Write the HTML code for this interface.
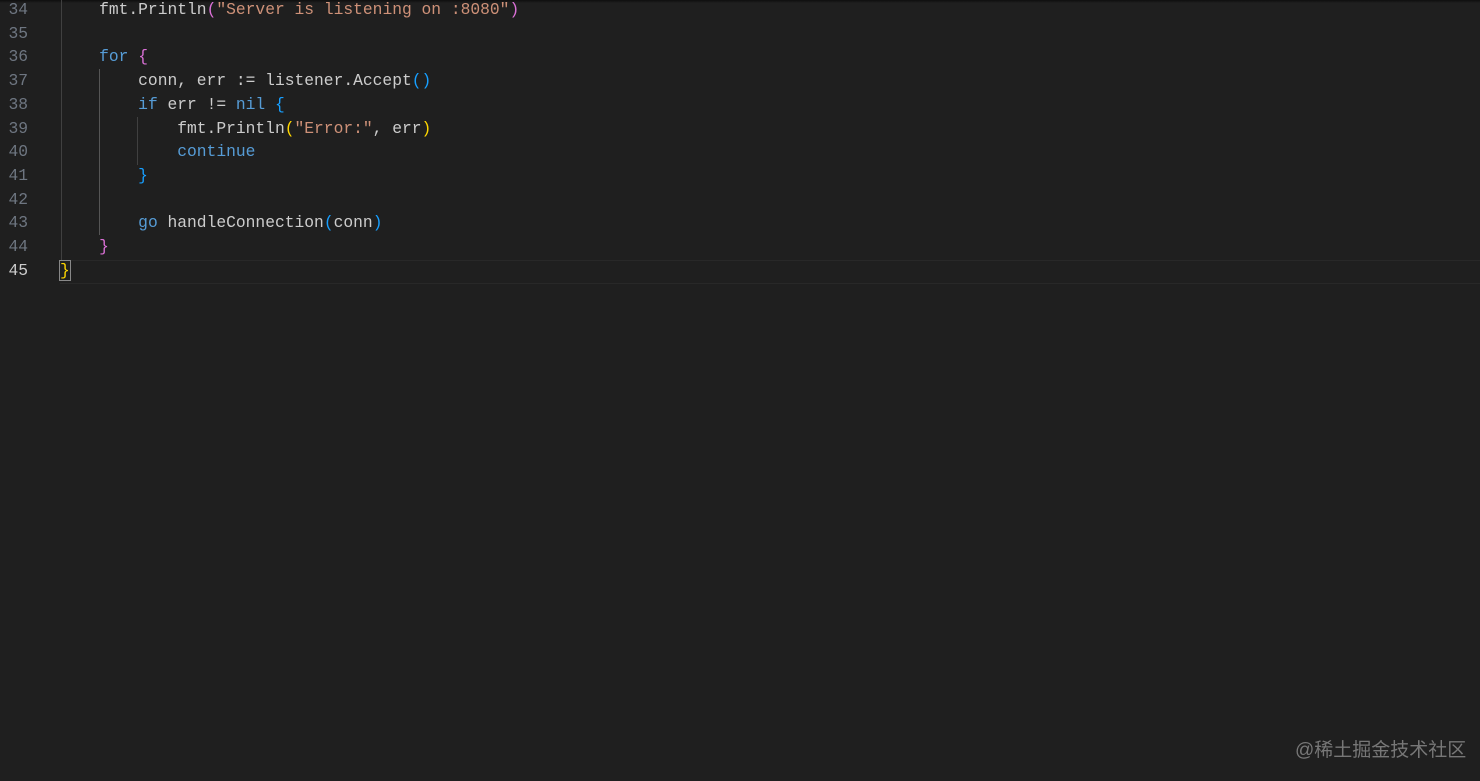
<!DOCTYPE html>
<html><head><meta charset="utf-8"><style>
body{margin:0;width:1480px;height:781px;background:#1f1f1f;overflow:hidden;position:relative;font-family:"Liberation Mono",monospace;font-size:16.3px}
.top{position:absolute;left:0;top:0;width:1480px;height:3px;background:linear-gradient(#0e0e0e,#1f1f1f)}
.ln{position:absolute;left:0;width:28px;text-align:right;color:#6e7681;height:24px;line-height:24px}
.c{position:absolute;left:60px;white-space:pre;color:#cccccc;height:24px;line-height:24px}
.k{color:#569cd6}.s{color:#ce9178}.p{color:#da70d6}.b{color:#179fff}.y{color:#ffd700}.w{color:#d4d4d4}
.g{position:absolute;width:1px;background:#404040}
.cur{position:absolute;left:60px;top:260px;width:1420px;height:22px;border-top:1px solid #282828;border-bottom:1px solid #282828}
.wm{position:absolute;left:1295px;top:735px;color:#777;font-family:"Liberation Sans","Noto Sans CJK SC",sans-serif;font-size:19px}
</style></head><body>
<div class="top"></div>
<div class="cur"></div>
<div class="g" style="left:61px;top:0;height:260px"></div>
<div class="g" style="left:99px;top:69px;height:166px;background:#555"></div>
<div class="g" style="left:137px;top:117px;height:48px"></div>
<div class="ln" style="top:-2px">34</div>
<div class="ln" style="top:21.7px">35</div>
<div class="ln" style="top:45.4px">36</div>
<div class="ln" style="top:69.1px">37</div>
<div class="ln" style="top:92.8px">38</div>
<div class="ln" style="top:116.5px">39</div>
<div class="ln" style="top:140.2px">40</div>
<div class="ln" style="top:163.9px">41</div>
<div class="ln" style="top:187.6px">42</div>
<div class="ln" style="top:211.3px">43</div>
<div class="ln" style="top:235px">44</div>
<div class="ln" style="top:258.7px;color:#ccc">45</div>
<div class="c" style="top:-2px">    fmt.Println<span class="p">(</span><span class="s">"Server is listening on :8080"</span><span class="p">)</span></div>
<div class="c" style="top:45.4px">    <span class="k">for</span> <span class="p">{</span></div>
<div class="c" style="top:69.1px">        conn, err := listener.Accept<span class="b">()</span></div>
<div class="c" style="top:92.8px">        <span class="k">if</span> err != <span class="k">nil</span> <span class="b">{</span></div>
<div class="c" style="top:116.5px">            fmt.Println<span class="y">(</span><span class="s">"Error:"</span>, err<span class="y">)</span></div>
<div class="c" style="top:140.2px">            <span class="k">continue</span></div>
<div class="c" style="top:163.9px">        <span class="b">}</span></div>
<div class="c" style="top:211.3px">        <span class="k">go</span> handleConnection<span class="b">(</span>conn<span class="b">)</span></div>
<div class="c" style="top:235px">    <span class="p">}</span></div>
<div class="c" style="top:258.7px"><span class="y" style="outline:1px solid #888">}</span></div>
<div class="wm">@稀土掘金技术社区</div>
</body></html>
